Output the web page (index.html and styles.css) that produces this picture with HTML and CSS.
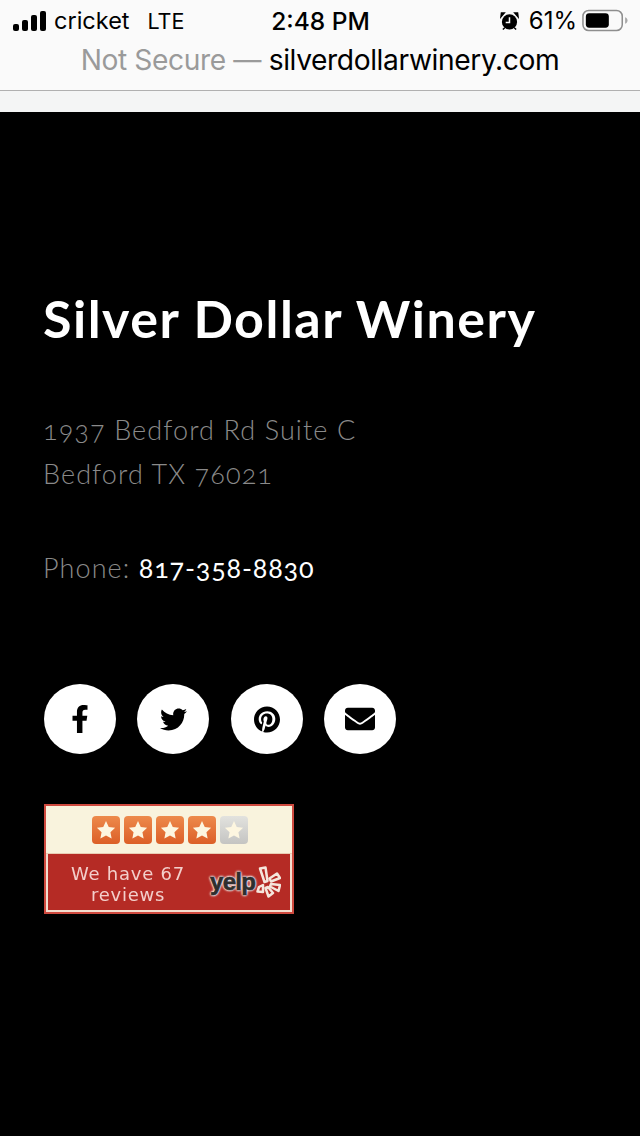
FILE: index.html
```html
<!DOCTYPE html>
<html lang="en">
<head>
<meta charset="utf-8">
<title>Silver Dollar Winery</title>
<link rel="stylesheet" href="styles.css">
</head>
<body>
<header class="chrome">
  <div class="status">
    <div class="status-left">
      <svg class="signal" viewBox="0 0 33 20" aria-hidden="true">
        <rect x="0" y="13" width="6" height="7" rx="2"/>
        <rect x="9" y="9" width="6" height="11" rx="2"/>
        <rect x="18" y="4" width="6" height="16" rx="2"/>
        <rect x="27" y="0" width="6" height="20" rx="2"/>
      </svg>
      <span class="carrier">cricket</span>
      <span class="network">LTE</span>
    </div>
    <div class="clock">2:48 PM</div>
    <div class="status-right">
      <svg class="alarm" viewBox="0 0 20 20" aria-hidden="true">
        <circle cx="10" cy="11" r="8"/>
        <path d="M1 5.500 4.500 1.500 1.500 1.500zM19 5.500 15.500 1.500 18.500 1.500z" stroke="#000" stroke-width="1.500"/>
        <path d="M3 19l2-2M17 19l-2-2" stroke="#000" stroke-width="1.500"/>
        <path d="M10 6v5.500H6" fill="none" stroke="#fafafa" stroke-width="1.600"/>
      </svg>
      <span class="percent">61%</span>
      <svg class="battery" viewBox="0 0 48 23" aria-hidden="true">
        <rect x="1" y="1" width="41" height="21" rx="6" fill="none" stroke="#8e8e8e" stroke-width="1.600"/>
        <rect x="4" y="4" width="24" height="15" rx="3.500" fill="#000"/>
        <path d="M45 8c1.500.5 2.500 2 2.500 3.500S46.500 14.500 45 15z" fill="#a8a8a8"/>
      </svg>
    </div>
  </div>
  <div class="address"><span class="insecure">Not Secure —</span> <span class="domain">silverdollarwinery.com</span></div>
  <div class="toolbar-gap"></div>
</header>
<main class="footer">
  <h1 class="name">Silver Dollar Winery</h1>
  <p class="lines">1937 Bedford Rd Suite C<br>Bedford TX 76021</p>
  <p class="lines phone">Phone: <a class="tel" href="#">817-358-8830</a></p>
  <nav class="social">
    <a class="disc" href="#" aria-label="Facebook">
      <svg class="ico-f" viewBox="0 0 320 512"><path d="M279.14 288l14.22-92.66h-88.91v-60.13c0-25.35 12.42-50.06 52.24-50.06h40.42V6.26S260.43 0 225.36 0c-73.22 0-121.08 44.38-121.08 124.72v70.62H22.89V288h81.39v224h100.17V288z"/></svg>
    </a>
    <a class="disc" href="#" aria-label="Twitter">
      <svg class="ico-t" viewBox="0 0 512 512"><path d="M459.37 151.716c.325 4.548.325 9.097.325 13.645 0 138.72-105.583 298.558-298.558 298.558-59.452 0-114.68-17.219-161.137-47.106 8.447.974 16.568 1.299 25.34 1.299 49.055 0 94.213-16.568 130.274-44.832-46.132-.975-84.792-31.188-98.112-72.772 6.498.974 12.995 1.624 19.818 1.624 9.421 0 18.843-1.3 27.614-3.573-48.081-9.747-84.143-51.98-84.143-102.985v-1.299c13.969 7.797 30.214 12.67 47.431 13.319-28.264-18.843-46.781-51.005-46.781-87.391 0-19.492 5.197-37.36 14.294-52.954 51.655 63.675 129.3 105.258 216.365 109.807-1.624-7.797-2.599-15.918-2.599-24.04 0-57.828 46.782-104.934 104.934-104.934 30.213 0 57.502 12.67 76.67 33.137 23.715-4.548 46.456-13.32 66.599-25.34-7.798 24.366-24.366 44.833-46.132 57.827 21.117-2.273 41.584-8.122 60.426-16.243-14.292 20.791-32.161 39.308-52.628 54.253z"/></svg>
    </a>
    <a class="disc" href="#" aria-label="Pinterest">
      <svg class="ico-p" viewBox="0 0 496 512"><path d="M496 256c0 137-111 248-248 248-25.6 0-50.2-3.9-73.4-11.1 10.1-16.5 25.2-43.5 30.8-65 3-11.6 15.4-59 15.4-59 8.1 15.4 31.7 28.5 56.8 28.5 74.8 0 128.7-68.8 128.7-154.3 0-81.9-66.9-143.2-152.9-143.2-107 0-163.9 71.8-163.9 150.1 0 36.4 19.4 81.7 50.3 96.1 4.7 2.2 7.2 1.2 8.3-3.3.8-3.4 5-20.3 6.9-28.1.6-2.5.3-4.7-1.7-7.1-10.1-12.5-18.3-35.3-18.3-56.6 0-54.7 41.4-107.6 112-107.6 60.9 0 103.6 41.5 103.6 100.9 0 67.1-33.9 113.6-78 113.6-24.3 0-42.6-20.1-36.7-44.8 7-29.5 20.5-61.3 20.5-82.6 0-19-10.2-34.9-31.4-34.9-24.9 0-44.9 25.7-44.9 60.2 0 22 7.4 36.8 7.4 36.8s-24.5 103.8-29 123.2c-5 21.4-3 51.6-.9 71.2C65.4 450.9 0 361.1 0 256 0 119 111 8 248 8s248 111 248 248z"/></svg>
    </a>
    <a class="disc" href="#" aria-label="Email">
      <svg class="ico-e" viewBox="0 0 512 512"><path d="M502.3 190.8c3.9-3.1 9.7-.2 9.7 4.7V400c0 26.5-21.5 48-48 48H48c-26.5 0-48-21.5-48-48V195.6c0-5 5.7-7.8 9.7-4.7 22.4 17.4 52.1 39.5 154.1 113.6 21.1 15.4 56.7 47.8 92.2 47.6 35.7.3 72-32.8 92.3-47.6 102-74.1 131.6-96.3 154-113.7zM256 320c23.2.4 56.6-29.2 73.4-41.4 132.7-96.3 142.8-104.7 173.4-128.7 5.8-4.500 9.200-11.500 9.200-18.900v-19c0-26.500-21.500-48-48-48H48C21.500 64 0 85.500 0 112v19c0 7.400 3.400 14.300 9.200 18.900 30.600 23.900 40.700 32.400 173.400 128.700 16.800 12.200 50.200 41.800 73.400 41.400z"/></svg>
    </a>
  </nav>
  <div class="badge">
    <div class="badge-top">
      <span class="tile"><svg viewBox="0 0 20 20"><path d="M10 2.500l2.300 4.900 5.300.7-3.900 3.700 1 5.300-4.700-2.600-4.700 2.600 1-5.300L2.400 8.100l5.300-.7z"/></svg></span>
      <span class="tile"><svg viewBox="0 0 20 20"><path d="M10 2.500l2.300 4.900 5.300.7-3.900 3.700 1 5.300-4.700-2.600-4.700 2.600 1-5.300L2.400 8.100l5.300-.7z"/></svg></span>
      <span class="tile"><svg viewBox="0 0 20 20"><path d="M10 2.500l2.300 4.900 5.300.7-3.900 3.700 1 5.300-4.700-2.600-4.700 2.600 1-5.300L2.400 8.100l5.300-.7z"/></svg></span>
      <span class="tile"><svg viewBox="0 0 20 20"><path d="M10 2.500l2.300 4.900 5.300.7-3.900 3.700 1 5.300-4.700-2.600-4.700 2.600 1-5.300L2.400 8.100l5.300-.7z"/></svg></span>
      <span class="tile tile-off"><svg viewBox="0 0 20 20"><path d="M10 2.500l2.300 4.900 5.300.7-3.900 3.700 1 5.300-4.700-2.600-4.700 2.600 1-5.300L2.400 8.100l5.300-.7z"/></svg></span>
    </div>
    <div class="badge-bottom">
      <div class="review-text">We have 67<br>reviews</div>
      <div class="yelp">
        <span class="yelp-word">yelp</span>
        <svg class="burst" viewBox="0 0 26 32" aria-hidden="true">
          <g fill="#b52b25" stroke="#f5e6dc" stroke-width="2.500" stroke-linejoin="round">
            <path d="M5 2.500 10.500 1.500 12.500 15 9.500 16z"/>
            <path d="M14.500 12.500 22 7.500 25 12 16 15.500z"/>
            <path d="M16 18 25 19 23.500 25 15 20.500z"/>
            <path d="M13 21 18 27 13.500 30.500 10.500 22z"/>
            <path d="M8 19 8 26 2.500 25.500 4 21z"/>
          </g>
        </svg>
      </div>
    </div>
  </div>
</main>
</body>
</html>
```

FILE: styles.css
```css
* { box-sizing: border-box; }
html, body { margin: 0; padding: 0; }
body {
  width: 640px;
  height: 1136px;
  overflow: hidden;
  background: #000;
  font-family: "Lato", "Open Sans", sans-serif;
}
.chrome {
  background: #fafafa;
  color: #000;
  font-family: "Inter", "Liberation Sans", sans-serif;
}
.status {
  display: grid;
  grid-template-columns: 1fr auto 1fr;
  align-items: center;
  height: 41px;
  padding: 0 12px 0 13px;
  font-size: 23.500px;
}
.status-left { display: flex; align-items: center; }
.signal { width: 33px; height: 20px; margin-right: 8px; }
.network { margin-left: 18px; font-size: 21.500px; }
.clock { font-weight: 500; font-size: 24.500px; }
.status-right { display: flex; align-items: center; justify-content: flex-end; }
.alarm { width: 19px; height: 20px; margin-right: 10px; }
.battery { width: 46px; height: 23px; }
.percent { margin-right: 5px; font-size: 24px; }
.address {
  height: 50px;
  padding-top: 1px;
  text-align: center;
  font-size: 28.200px;
  line-height: 36px;
  letter-spacing: -0.4px;
  border-bottom: 1px solid #b0b0b0;
}
.insecure { color: #9a9a9a; }
.toolbar-gap { height: 21px; background: #f4f5f5; }
.footer { padding: 174px 44px 0 43px; }
.name {
  margin: 0;
  color: #fff;
  font-size: 52px;
  font-weight: 700;
  line-height: 64px;
  letter-spacing: 1.500px;
}
.lines {
  margin: 0;
  color: #8a8a8a;
  font-size: 27px;
  font-weight: 300;
  line-height: 44px;
  letter-spacing: 1.100px;
  font-variant-numeric: oldstyle-nums;
}
.name + .lines { margin-top: 58px; }
.phone { margin-top: 50px; }
.tel { color: #fff; font-weight: 400; text-decoration: none; letter-spacing: 0.800px; }
.social { display: flex; gap: 21.300px; margin: 94px 0 0 1px; }
.disc {
  display: flex;
  align-items: center;
  justify-content: center;
  width: 72px;
  height: 70px;
  border-radius: 50%;
  background: #fff;
}
.disc svg { display: block; fill: #000; }
.ico-f { width: 18px; height: 28px; }
.ico-t { width: 27px; height: 27px; }
.ico-p { width: 26px; height: 27px; }
.ico-e { width: 30px; height: 30px; }
.badge {
  display: flex;
  flex-direction: column;
  width: 250px;
  height: 110px;
  margin: 50px 0 0 1px;
  border: 2px solid #cf4a3f;
  background: #f9f3dd;
}
.badge-top {
  display: flex;
  justify-content: center;
  align-items: center;
  gap: 4px;
  height: 48px;
  padding-left: 2px;
  border-bottom: 1px solid #e9cdb4;
}
.tile {
  display: flex;
  align-items: center;
  justify-content: center;
  width: 28px;
  height: 28px;
  border-radius: 4px;
  background: linear-gradient(#ed8a4b, #dc5f27);
}
.tile svg { width: 24px; height: 24px; fill: #fdf6e0; filter: blur(0.4px); }
.tile-off { background: linear-gradient(#e2e2de, #c4c4c2); }
.badge-bottom {
  flex: 1;
  display: flex;
  align-items: center;
  border: 2px solid #f3ded0;
  border-top: 0;
  background: #b52b25;
}
.review-text {
  width: 160px;
  color: #f3cfcb;
  font-family: "DejaVu Sans", sans-serif;
  font-size: 18px;
  line-height: 21px;
  letter-spacing: 0.750px;
  text-align: center;
  filter: blur(0.4px);
  padding-top: 4px;
  white-space: nowrap;
}
.yelp { display: flex; align-items: center; margin-left: 2px; }
.yelp-word {
  color: #2e2e2e;
  font-family: "Liberation Sans", sans-serif;
  font-size: 24px;
  font-weight: 700;
  letter-spacing: -0.7px;
  -webkit-text-stroke: 0.7px #2e2e2e;
  text-shadow: 0 0 1px #fff, 0 0 2px #fff, 0 0 2px #fff, 0 0 3px #fff, 0 0 3px #fff;
}
.burst { display: block; width: 26px; height: 32px; filter: blur(0.4px); }
```
